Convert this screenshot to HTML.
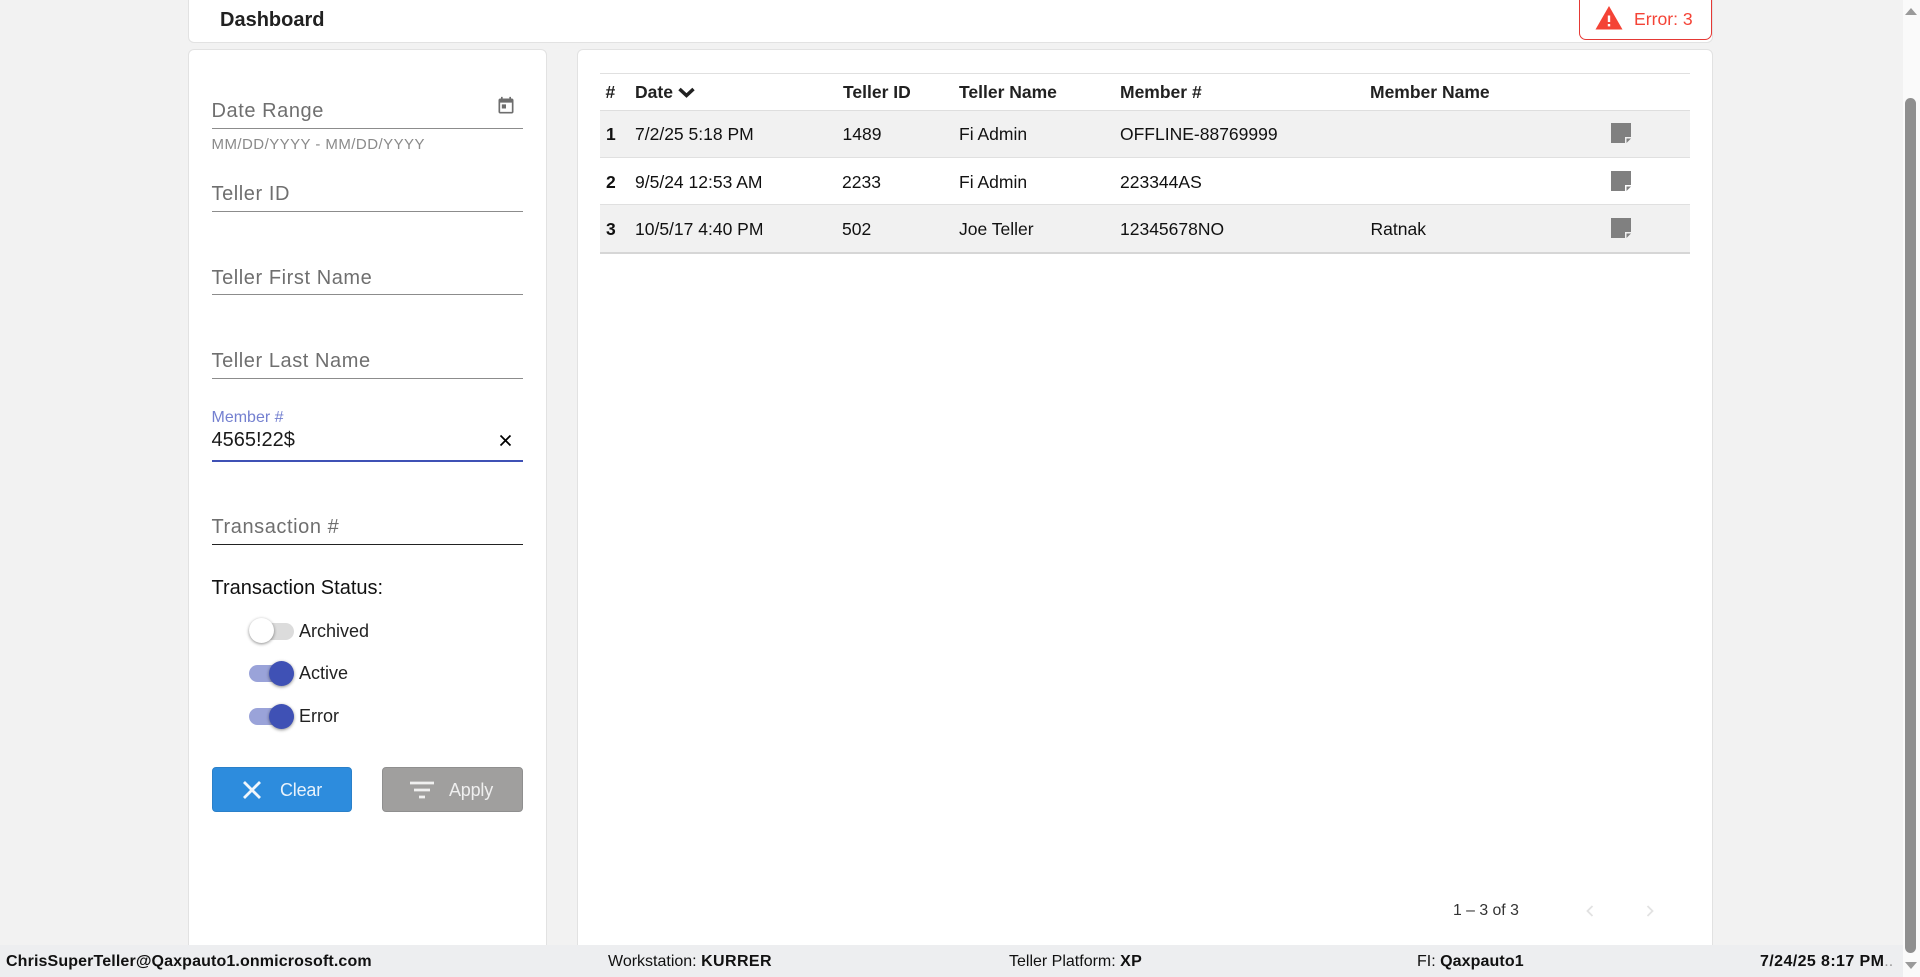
<!DOCTYPE html>
<html><head><meta charset="utf-8"><title>Dashboard</title>
<style>
html,body{margin:0;padding:0;width:1920px;height:977px;overflow:hidden;background:#f2f2f2;font-family:"Liberation Sans",Arial,sans-serif;color:#000}
.a{position:absolute;white-space:nowrap}
.card{position:absolute;background:#fff;border:1px solid #e2e2e2;box-sizing:border-box;border-radius:6px}
.ph{position:absolute;left:211.500px;font-size:20px;letter-spacing:.57px;color:#6f6f6f;line-height:24px;white-space:nowrap}
.ul{position:absolute;left:212px;width:311px;height:1px;background:#8c8c8c}
.th{position:absolute;top:82px;font-size:17.500px;font-weight:bold;color:#212121;line-height:20px;white-space:nowrap}
.td{position:absolute;font-size:17.500px;color:#111;line-height:20px;white-space:nowrap}
.row{position:absolute;left:600px;width:1090px;box-sizing:border-box;border-bottom:1px solid #e0e0e0}
.track{position:absolute;left:249px;width:45px;height:17px;border-radius:9px}
.knob{position:absolute;width:25px;height:25px;border-radius:50%;box-shadow:0 1px 3px rgba(0,0,0,.45)}
.lab{position:absolute;left:299px;font-size:18px;color:#222;line-height:22px}
.note{position:absolute;left:1611px;width:20px;height:20px}
.sb{position:absolute;top:952px;font-size:16px;line-height:20px;color:#111;white-space:nowrap}
</style></head><body>

<div class="card" style="left:188px;top:-10px;width:1525px;height:53px"></div>
<div class="a" style="left:220px;top:8px;font-size:20px;font-weight:bold;color:#212121;line-height:24px">Dashboard</div>
<div class="a" style="left:1579px;top:-8px;width:133px;height:48px;box-sizing:border-box;border:1.5px solid #e53935;border-radius:7px;background:#fff"></div>
<svg class="a" style="left:1595px;top:6px" width="28" height="24" viewBox="0 0 28 24"><path d="M14 0L27.500 23.500H.5Z" fill="#f44336"/><rect x="12.800" y="9.500" width="2.400" height="6.500" fill="#fff"/><rect x="12.800" y="18" width="2.400" height="2.400" fill="#fff"/></svg>
<div class="a" style="left:1634px;top:9px;font-size:17.600px;color:#f44336;line-height:20px">Error: 3</div>

<div class="card" style="left:188px;top:49px;width:359px;height:920px"></div>
<div class="card" style="left:577px;top:49px;width:1136px;height:920px"></div>

<div class="ph" style="top:99px">Date Range</div>
<svg class="a" style="left:496px;top:96px" width="20" height="20" viewBox="0 0 24 24"><path fill="#6e6e6e" d="M19 3h-1V1h-2v2H8V1H6v2H5c-1.100 0-2 .9-2 2v14c0 1.100.9 2 2 2h14c1.100 0 2-.9 2-2V5c0-1.100-.9-2-2-2zm0 16H5V8h14v11zM7 10h5v5H7z"/></svg>
<div class="ul" style="top:128px"></div>
<div class="a" style="left:211.500px;top:136px;font-size:15px;letter-spacing:.45px;color:#8a8a8a;line-height:17px">MM/DD/YYYY - MM/DD/YYYY</div>

<div class="ph" style="top:182px">Teller ID</div>
<div class="ul" style="top:211px"></div>
<div class="ph" style="top:266px">Teller First Name</div>
<div class="ul" style="top:294px"></div>
<div class="ph" style="top:349px">Teller Last Name</div>
<div class="ul" style="top:378px"></div>

<div class="a" style="left:211.500px;top:409px;font-size:16px;color:#7480d0;line-height:18px">Member #</div>
<div class="a" style="left:211.500px;top:428px;font-size:20px;color:#1a1a1a;line-height:24px">4565!22$</div>
<svg class="a" style="left:499px;top:434px" width="13" height="13" viewBox="0 0 13 13"><path d="M1.500 1.500L11.500 11.500M11.500 1.500L1.500 11.500" stroke="#000" stroke-width="1.700" fill="none"/></svg>
<div class="a" style="left:212px;top:460px;width:311px;height:2px;background:#3f51b5"></div>

<div class="ph" style="top:515px">Transaction #</div>
<div class="ul" style="top:544px;background:#222"></div>

<div class="a" style="left:211.500px;top:576px;font-size:20px;color:#111;line-height:24px">Transaction Status:</div>

<div class="track" style="top:623px;background:#dcdcdc"></div>
<div class="knob" style="left:249px;top:618px;background:#fff"></div>
<div class="lab" style="top:620px">Archived</div>
<div class="track" style="top:665px;background:#9aa3d9"></div>
<div class="knob" style="left:269px;top:661px;background:#3f51b5"></div>
<div class="lab" style="top:662px">Active</div>
<div class="track" style="top:708px;background:#9aa3d9"></div>
<div class="knob" style="left:269px;top:704px;background:#3f51b5"></div>
<div class="lab" style="top:705px">Error</div>

<div class="a" style="left:212px;top:767px;width:140px;height:45px;background:#2d8cdd;border:1px solid #2a80c9;box-sizing:border-box;border-radius:4px"></div>
<svg class="a" style="left:243px;top:781px" width="18" height="18" viewBox="0 0 18 18"><path d="M1 1L17 17M17 1L1 17" stroke="#f1f6fb" stroke-width="2.800" fill="none"/></svg>
<div class="a" style="left:280px;top:779px;font-size:18px;color:#e8f2fb;line-height:22px;letter-spacing:-.2px">Clear</div>
<div class="a" style="left:382px;top:767px;width:141px;height:45px;background:#a09f9e;border:1px solid #8f8f8f;box-sizing:border-box;border-radius:4px"></div>
<svg class="a" style="left:410px;top:781px" width="24" height="18" viewBox="0 0 24 18"><path d="M0 2H24M4 9H20M9 16H15" stroke="#f0f0f0" stroke-width="2.700" fill="none"/></svg>
<div class="a" style="left:449px;top:779px;font-size:18px;color:#efefef;line-height:22px;letter-spacing:-.2px">Apply</div>

<div class="a" style="left:600px;top:73px;width:1090px;height:1px;background:#e0e0e0"></div>
<div class="row" style="top:110px;height:48px;background:#f1f1f1;border-top:1px solid #dedede"></div>
<div class="row" style="top:158px;height:47px;background:#fff"></div>
<div class="row" style="top:205px;height:49px;background:#f1f1f1;border-bottom:2px solid #d6d6d6"></div>

<div class="th" style="left:605.500px">#</div>
<div class="th" style="left:635px">Date</div>
<svg class="a" style="left:678px;top:87px" width="17" height="11" viewBox="0 0 17 11"><path d="M1.500 2L8.500 8.500L15.500 2" stroke="#212121" stroke-width="3.500" fill="none"/></svg>
<div class="th" style="left:843px">Teller ID</div>
<div class="th" style="left:959px">Teller Name</div>
<div class="th" style="left:1120px">Member #</div>
<div class="th" style="left:1370px">Member Name</div>

<div class="th" style="left:606px;top:124px;color:#111">1</div>
<div class="td" style="left:635px;top:124px">7/2/25 5:18 PM</div>
<div class="td" style="left:842.500px;top:124px">1489</div>
<div class="td" style="left:959px;top:124px">Fi Admin</div>
<div class="td" style="left:1120px;top:124px">OFFLINE-88769999</div>

<div class="th" style="left:606px;top:172px;color:#111">2</div>
<div class="td" style="left:635px;top:172px">9/5/24 12:53 AM</div>
<div class="td" style="left:842px;top:172px">2233</div>
<div class="td" style="left:959px;top:172px">Fi Admin</div>
<div class="td" style="left:1120px;top:172px">223344AS</div>

<div class="th" style="left:606px;top:219px;color:#111">3</div>
<div class="td" style="left:635px;top:219px">10/5/17 4:40 PM</div>
<div class="td" style="left:842px;top:219px">502</div>
<div class="td" style="left:959px;top:219px">Joe Teller</div>
<div class="td" style="left:1120px;top:219px">12345678NO</div>
<div class="td" style="left:1370.500px;top:219px">Ratnak</div>

<svg class="note" style="top:123px" viewBox="0 0 20 20"><path d="M0 0H20V14H14V20H0Z" fill="#808080"/><path d="M15.500 15.500H20L15.500 20Z" fill="#808080"/></svg>
<svg class="note" style="top:171px" viewBox="0 0 20 20"><path d="M0 0H20V14H14V20H0Z" fill="#808080"/><path d="M15.500 15.500H20L15.500 20Z" fill="#808080"/></svg>
<svg class="note" style="top:218px" viewBox="0 0 20 20"><path d="M0 0H20V14H14V20H0Z" fill="#808080"/><path d="M15.500 15.500H20L15.500 20Z" fill="#808080"/></svg>

<div class="a" style="left:1453px;top:902px;font-size:15.800px;color:#333;line-height:18px">1 – 3 of 3</div>
<svg class="a" style="left:1585px;top:903px" width="10" height="16" viewBox="0 0 10 16"><path d="M7.500 3L2.500 8L7.500 13" stroke="#e2e2e2" stroke-width="1.800" fill="none"/></svg>
<svg class="a" style="left:1645px;top:903px" width="10" height="16" viewBox="0 0 10 16"><path d="M2.500 3L7.500 8L2.500 13" stroke="#e2e2e2" stroke-width="1.800" fill="none"/></svg>

<div class="a" style="left:0;top:945px;width:1903px;height:32px;background:#edeef0"></div>
<div class="sb" style="left:6px;font-weight:bold;letter-spacing:.13px">ChrisSuperTeller@Qaxpauto1.onmicrosoft.com</div>
<div class="sb" style="left:608px">Workstation: <b style="letter-spacing:.4px">KURRER</b></div>
<div class="sb" style="left:1009px">Teller Platform: <b style="letter-spacing:.3px">XP</b></div>
<div class="sb" style="left:1417px">FI: <b style="letter-spacing:.1px">Qaxpauto1</b></div>
<div class="sb" style="left:1760px"><b style="letter-spacing:.4px">7/24/25 8:17 PM</b><span style="color:#999">..</span></div>

<div class="a" style="left:1903px;top:0;width:17px;height:977px;background:#fafafa"></div>
<div class="a" style="left:1905px;top:98px;width:11px;height:855px;background:#8f8f8f;border-radius:6px"></div>
<svg class="a" style="left:1904px;top:7px" width="14" height="9" viewBox="0 0 14 9"><path d="M7 1L13 8H1Z" fill="#9a9a9a"/></svg>
<svg class="a" style="left:1904px;top:961px" width="14" height="9" viewBox="0 0 14 9"><path d="M1 1H13L7 8Z" fill="#9a9a9a"/></svg>
</body></html>
